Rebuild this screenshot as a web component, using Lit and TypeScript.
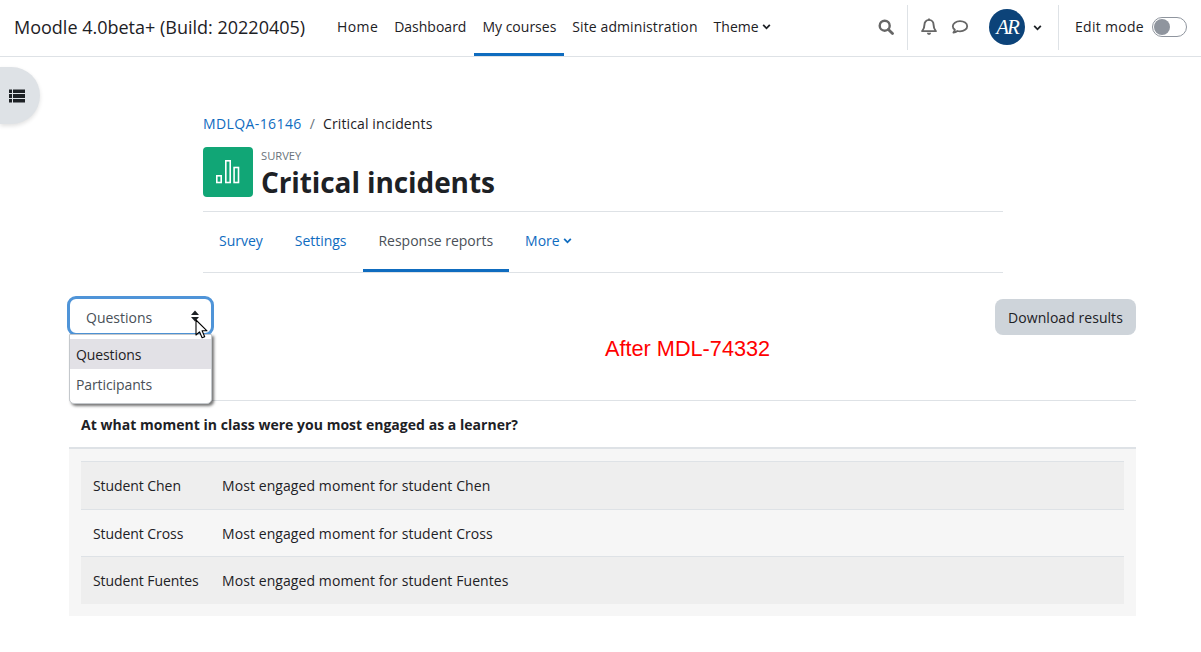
import { LitElement, html, css } from "lit";
import { customElement } from "lit/decorators.js";

const chevron = html`<svg class="chev" viewBox="0 0 10 10" width="9" height="9"><path d="M1.3 3.2 5 7 8.7 3.2" fill="none" stroke="currentColor" stroke-width="2"/></svg>`;

@customElement("app-root")
export class AppRoot extends LitElement {
  static styles = css`
    :host { display: block; width: 1201px; height: 652px; overflow: hidden; position: relative; background: #fff;
      font-family: "Open Sans", "Noto Sans", sans-serif; font-size: 14px; color: #1d2125; }
    * { box-sizing: border-box; }
    .top { height: 57px; border-bottom: 1px solid #dee2e6; display: flex; align-items: stretch; padding: 0 14px; }
    .brand { font-size: 18px; line-height: 54px; width: 315px; white-space: nowrap; }
    .nav { display: flex; }
    .nav a { padding: 0 8px; height: 56px; border-bottom: 3px solid transparent; display: flex; align-items: center; gap: 3px; white-space: nowrap; color: #1d2125; }
    .nav a.on { border-bottom-color: #0f6cbf; }
    .nav a.home { letter-spacing: 0.4px; }
    .nav a.admin { letter-spacing: 0.1px; }
    .right { margin-left: auto; display: flex; align-items: center; padding-bottom: 2px; }
    .ico { display: block; color: #666; }
    .sep { width: 1px; height: 45px; background: #dee2e6; }
    .search { margin-right: 13px; }
    .bell { margin: 0 14px 0 13px; }
    .avatar { width: 36px; height: 36px; margin: 0 8px 0 20px; border-radius: 50%; background: #0c4379; color: #fff; display: flex; align-items: center; justify-content: center;
      font-family: "Liberation Serif", serif; font-style: italic; font-size: 21px; letter-spacing: -2px; }
    .usermenu { margin-right: 16px; display: flex; color: #1d2125; }
    .edit { margin: 0 8px 0 16px; padding-bottom: 2px; white-space: nowrap; letter-spacing: 0.3px; }
    .switch { width: 35px; height: 20px; border: 1px solid #8f959e; border-radius: 10px; background: #fff; padding: 1px; display: flex; }
    .knob { width: 16px; height: 16px; border-radius: 50%; background: #8f959e; }

    .drawerbtn { position: absolute; left: 0; top: 67px; width: 40px; height: 57px; background: #dee2e6; border-radius: 0 29px 29px 0; box-shadow: 0 2px 4px rgba(0,0,0,.12); display: flex; align-items: center; padding-left: 9px; }

    .main { width: 800px; margin: 0 0 0 203px; }
    .crumbs { padding-top: 56px; line-height: 21px; display: flex; gap: 8px; color: #1d2125; letter-spacing: 0.12px; }
    .crumbs a { color: #0f6cbf; letter-spacing: 0.4px; }
    .crumbs .slash { color: #6a737b; }
    .head { display: flex; gap: 8px; margin-top: 13px; height: 50px; }
    .tile { width: 50px; height: 50px; background: #11a676; border-radius: 4px; display: flex; align-items: center; justify-content: center; }
    .kind { font-size: 11.200px; line-height: 14px; color: #6a737b; margin-top: 2px; }
    h1 { font-size: 28px; line-height: 36px; margin: 1px 0 0; font-weight: 700; letter-spacing: -0.1px; white-space: nowrap; }
    .tabs { margin-top: 14px; border-top: 1px solid #dee2e6; border-bottom: 1px solid #dee2e6; height: 62px; display: flex; letter-spacing: -0.02px; }
    .tabs a { padding: 0 16px; display: flex; align-items: center; gap: 3px; height: 60px; border-bottom: 3px solid transparent; color: #495057; white-space: nowrap; }
    .tabs a.link { color: #0f6cbf; }
    .tabs a.on { border-bottom-color: #0f6cbf; }

    .wide { width: 1067px; margin-left: 69px; }
    .toolbar { display: flex; justify-content: space-between; align-items: flex-start; padding-top: 23px; height: 128px; border-bottom: 1px solid #dee2e6; }
    .select { width: 147px; height: 40px; margin: 0 0 0 -2px; border: 3.500px solid #4f94d8; border-radius: 9px; background: #fff; padding: 3px 11px 0 16px; display: flex; align-items: center; justify-content: space-between; color: #495057; }
    .select svg { margin-top: -3px; }
    .btn { margin-top: 3px; height: 36px; width: 141px; border-radius: 8px; background: #ced4da; color: #1d2125; display: flex; align-items: center; justify-content: center; white-space: nowrap; letter-spacing: 0.05px; }
    .question { font-weight: 700; height: 46px; line-height: 47px; padding-left: 12px; letter-spacing: 0.03px; }
    .panel { background: #f6f6f6; border-top: 2px solid #dee2e6; padding: 12px; }
    .row { display: grid; grid-template-columns: 129px 1fr; height: 48px; align-items: center; padding-left: 12px; border-top: 1px solid #dee2e6; white-space: nowrap; }
    .row:nth-child(odd) { background: #eeeeee; }
    .row:nth-child(2) { height: 47px; }
    .row span + span { letter-spacing: 0.08px; }
    .row span:first-child { letter-spacing: -0.07px; }

    .menu { position: absolute; left: 69px; top: 334px; width: 143px; height: 70px; background: #fff; border: 1px solid #c4c8cc; border-radius: 0 0 5px 5px; box-shadow: 2px 2px 3px rgba(0,0,0,.55); padding-top: 4px; letter-spacing: -0.1px; }
    .opt { height: 30px; line-height: 31px; padding-left: 6px; color: #495057; }
    .opt.sel { background: #e2e1e6; color: #1d2125; }
    .note { position: absolute; left: 605px; top: 336px; font-family: "Liberation Sans", Arial, sans-serif; font-size: 21.700px; line-height: 26px; color: #f00; }
    .cursor { position: absolute; left: 195px; top: 319px; display: block; }
  `;

  render() {
    return html`
      <header class="top">
        <div class="brand">Moodle 4.0beta+ (Build: 20220405)</div>
        <nav class="nav">
          <a class="home">Home</a><a>Dashboard</a><a class="on">My courses</a><a class="admin">Site administration</a><a>Theme ${chevron}</a>
        </nav>
        <div class="right">
          <svg class="ico search" viewBox="0 0 16 16" width="16" height="16"><circle cx="6.700" cy="6.700" r="5" fill="none" stroke="currentColor" stroke-width="2.400"/><path d="M10.400 10.400 14.500 14.500" stroke="currentColor" stroke-width="2.800" stroke-linecap="round"/></svg>
          <div class="sep"></div>
          <svg class="ico bell" viewBox="0.500 0 15 17" width="16" height="18"><path d="M8 1.800c-2.600 0-4.300 2-4.300 4.600 0 3.500-1 4.600-2.200 6h13c-1.200-1.400-2.200-2.500-2.200-6C12.300 3.800 10.600 1.800 8 1.800Z" fill="none" stroke="currentColor" stroke-width="1.800" stroke-linejoin="round"/><path d="M6 14a2 2 0 0 0 4 0Z" fill="currentColor"/><path d="M8 .5v2" stroke="currentColor" stroke-width="1.600"/></svg>
          <svg class="ico" viewBox="0 0 18 16" width="18" height="16"><path d="M9 2.200c-4 0-7.200 2.200-7.200 5 0 1.400.8 2.700 2.100 3.600-.2 1-.8 1.900-1.500 2.700 1.500-.1 2.900-.7 4-1.500.8.200 1.700.3 2.600.3 4 0 7.200-2.200 7.200-5.100S13 2.200 9 2.200Z" fill="none" stroke="currentColor" stroke-width="1.800" stroke-linejoin="round"/></svg>
          <div class="avatar">AR</div>
          <div class="usermenu">${chevron}</div>
          <div class="sep"></div>
          <div class="edit">Edit mode</div>
          <div class="switch"><div class="knob"></div></div>
        </div>
      </header>

      <div class="drawerbtn">
        <svg viewBox="0 0 16 14" width="16" height="14"><path fill="#1d2125" d="M0 .5h3v3.600H0zM4 .5h12v3.600H4zM0 5.100h3v3.800H0zM4 5.100h12v3.800H4zM0 9.900h3v3.600H0zM4 9.900h12v3.600H4z"/></svg>
      </div>

      <div class="main">
        <div class="crumbs"><a>MDLQA-16146</a><span class="slash">/</span><span>Critical incidents</span></div>
        <div class="head">
          <div class="tile">
            <svg viewBox="0 0 24 24" width="24" height="24" fill="none" stroke="#fff" stroke-width="1.600"><rect x="0.800" y="15.800" width="4.400" height="6.700"/><rect x="9.800" y="0.800" width="4.400" height="21.700"/><rect x="18.100" y="7.500" width="4.400" height="15"/></svg>
          </div>
          <div><div class="kind">SURVEY</div><h1>Critical incidents</h1></div>
        </div>
        <div class="tabs">
          <a class="link">Survey</a><a class="link">Settings</a><a class="on">Response reports</a><a class="link">More ${chevron}</a>
        </div>
      </div>

      <div class="wide">
        <div class="toolbar">
          <div class="select"><span>Questions</span>
            <svg viewBox="0 0 10 14" width="10" height="14"><path fill="#1d2125" d="M5 1.500 9 6H1ZM1 8h8l-4 4.500Z"/></svg>
          </div>
          <div class="btn">Download results</div>
        </div>
        <div class="question">At what moment in class were you most engaged as a learner?</div>
        <div class="panel">
          <div class="row"><span>Student Chen</span><span>Most engaged moment for student Chen</span></div>
          <div class="row"><span>Student Cross</span><span>Most engaged moment for student Cross</span></div>
          <div class="row"><span>Student Fuentes</span><span>Most engaged moment for student Fuentes</span></div>
        </div>
      </div>

      <div class="menu"><div class="opt sel">Questions</div><div class="opt">Participants</div></div>
      <div class="note">After MDL-74332</div>
      <svg class="cursor" viewBox="0 0 14 22" width="14" height="22"><path d="M1 1v15l3.500-3.200 2.600 6 2.600-1.100-2.600-5.900H12Z" fill="#fff" stroke="#000" stroke-width="1.100" stroke-linejoin="round"/></svg>
    `;
  }
}
